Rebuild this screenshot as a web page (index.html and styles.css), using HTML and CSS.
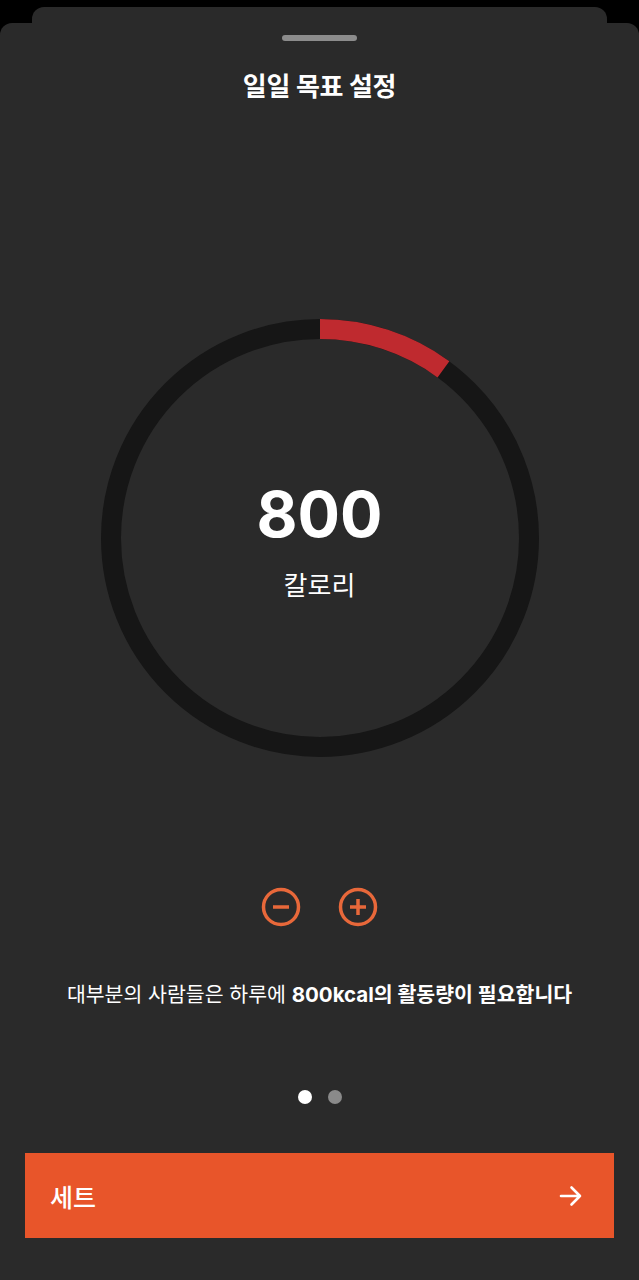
FILE: index.html
```html
<!DOCTYPE html>
<html lang="ko">
<head>
<meta charset="utf-8">
<title>일일 목표 설정</title>
<link rel="stylesheet" href="styles.css">
</head>
<body>
<div class="stack">
  <div class="back-card"></div>
  <main class="sheet">
    <div class="handle"></div>
    <h1 class="title">일일 목표 설정</h1>

    <div class="dial">
      <svg class="ring" width="438" height="438" viewBox="0 0 438 438">
        <circle cx="219" cy="219" r="209" fill="none" stroke="#161616" stroke-width="20"/>
        <circle cx="219" cy="219" r="209" fill="none" stroke="#bf2a2f" stroke-width="20"
                stroke-dasharray="132 2000" transform="rotate(-90 219 219)"/>
      </svg>
      <div class="dial-text">
        <div class="value">800</div>
        <div class="unit">칼로리</div>
      </div>
    </div>

    <div class="steppers">
      <button class="step" aria-label="감소">
        <svg width="40" height="40" viewBox="0 0 40 40">
          <circle cx="20" cy="20" r="17.5" fill="none" stroke="#e8683a" stroke-width="3.5"/>
          <line x1="12" y1="20" x2="28" y2="20" stroke="#e8683a" stroke-width="3.5"/>
        </svg>
      </button>
      <button class="step" aria-label="증가">
        <svg width="40" height="40" viewBox="0 0 40 40">
          <circle cx="20" cy="20" r="17.5" fill="none" stroke="#e8683a" stroke-width="3.5"/>
          <line x1="12" y1="20" x2="28" y2="20" stroke="#e8683a" stroke-width="3.5"/>
          <line x1="20" y1="12" x2="20" y2="28" stroke="#e8683a" stroke-width="3.5"/>
        </svg>
      </button>
    </div>

    <p class="hint">대부분의 사람들은 하루에 <strong>800kcal의 활동량이 필요합니다</strong></p>

    <div class="dots">
      <span class="dot active"></span>
      <span class="dot"></span>
    </div>

    <button class="cta">
      <span class="cta-label">세트</span>
      <svg width="26" height="26" viewBox="0 0 26 26">
        <path d="M3 13 H22 M13.5 4.5 L22 13 L13.5 21.5" fill="none" stroke="#fff" stroke-width="2.6" stroke-linecap="round" stroke-linejoin="round"/>
      </svg>
    </button>
  </main>
</div>
</body>
</html>
```

FILE: styles.css
```css
html, body {
  margin: 0;
  padding: 0;
}
body {
  background: #000;
  width: 639px;
  height: 1280px;
  overflow: hidden;
  font-family: Inter, "Noto Sans CJK KR", sans-serif;
  color: #fff;
}
.stack {
  padding-top: 7px;
}
.back-card {
  margin: 0 32px;
  height: 16px;
  background: #2a2a2a;
  border-radius: 12px 12px 0 0;
}
.sheet {
  background: #2a2a2a;
  border-radius: 12px 12px 0 0;
  height: 1257px;
  display: flex;
  flex-direction: column;
  align-items: center;
}
.handle {
  margin-top: 12px;
  width: 75px;
  height: 6px;
  border-radius: 3px;
  background: #8c8c8c;
}
.title {
  margin: 29px 0 0;
  font-size: 26px;
  line-height: 34px;
  font-weight: 700;
  letter-spacing: -0.3px;
}
.dial {
  margin-top: 215px;
  width: 438px;
  height: 438px;
  display: grid;
}
.ring, .dial-text {
  grid-area: 1 / 1;
}
.dial-text {
  display: flex;
  flex-direction: column;
  align-items: center;
  padding-top: 164px;
}
.value {
  font-size: 63px;
  line-height: 63px;
  font-weight: 700;
}
.unit {
  margin-top: 23px;
  font-size: 26px;
  line-height: 34px;
  font-weight: 400;
}
.steppers {
  margin-top: 130px;
  display: flex;
  gap: 37px;
}
.step {
  width: 40px;
  height: 40px;
  padding: 0;
  border: 0;
  background: none;
  display: block;
}
.step svg {
  display: block;
}
.hint {
  margin: 54px 0 0;
  font-size: 20.5px;
  line-height: 28px;
  font-weight: 400;
}
.hint strong {
  font-weight: 700;
}
.dots {
  margin-top: 81px;
  display: flex;
  gap: 16px;
}
.dot {
  width: 14px;
  height: 14px;
  border-radius: 50%;
  background: #8a8a8a;
}
.dot.active {
  background: #fff;
}
.cta {
  margin-top: 49px;
  align-self: stretch;
  margin-left: 25px;
  margin-right: 25px;
  height: 85px;
  border: 0;
  background: #e8552a;
  color: #fff;
  display: flex;
  align-items: center;
  justify-content: space-between;
  padding: 0 30px 0 25px;
  font-family: Inter, "Noto Sans CJK KR", sans-serif;
}
.cta-label {
  font-size: 25px;
  font-weight: 500;
}
.cta svg {
  display: block;
}
```
